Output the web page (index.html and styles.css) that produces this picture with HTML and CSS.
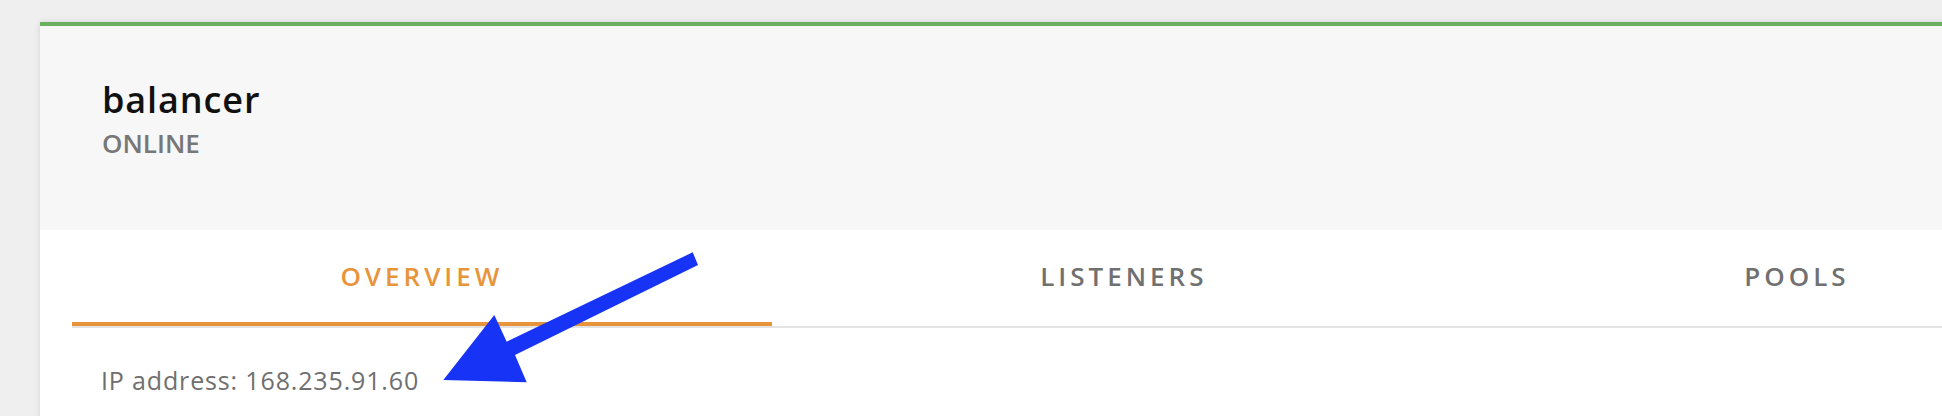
FILE: index.html
```html
<!DOCTYPE html>
<html lang="en">
<head>
    <meta charset="UTF-8">
    <meta name="viewport" content="width=device-width, initial-scale=1.0">
    <title>balancer</title>
    <link rel="stylesheet" href="styles.css">
</head>
<body>
    <div class="tarjeta">
        <div class="cabecera">
            <div class="nombre">balancer</div>
            <div class="estado">ONLINE</div>
        </div>
        <div class="pestanas">
            <div class="pestana activa">OVERVIEW</div>
            <div class="pestana">LISTENERS</div>
            <div class="pestana">POOLS</div>
        </div>
        <div class="contenido">
            IP address: 168.235.91.60
        </div>
    </div>

    <svg class="flecha" viewBox="0 0 1942 416" width="1942" height="416">
        <polygon points="692.7,252.3 698,265 515,355 526.7,382.3 443.3,380 494.3,315 506.7,341.7" fill="#1733f5"/>
    </svg>
</body>
</html>
```

FILE: styles.css
```css
body {
    margin: 0;
    font-family: "Open Sans", Arial, sans-serif;
    background-color: #efefef;
    overflow: hidden;
    height: 416px;
}
.tarjeta {
    margin: 22px 0 0 40px;
    width: 2110px;
    background: white;
    border-top: 4px solid #6aaf5e;
    box-shadow: 0 0 6px rgba(0, 0, 0, 0.12);
    min-height: 400px;
}
.cabecera {
    background: #f7f7f7;
    height: 204px;
    box-sizing: border-box;
    padding: 52px 62px 0;
}
.nombre {
    font-size: 36px;
    line-height: 44px;
    font-weight: 600;
    letter-spacing: 0.9px;
    color: #111;
}
.estado {
    margin-top: 5px;
    font-size: 26px;
    line-height: 32px;
    font-weight: 600;
    color: #777;
}
.pestanas {
    display: flex;
    margin: 0 32px;
    border-bottom: 2px solid #e3e3e3;
}
.pestana {
    flex: 1 1 auto;
    text-align: center;
    padding: 30px 0;
    line-height: 32px;
    font-size: 26px;
    font-weight: 600;
    letter-spacing: 4px;
    color: #707070;
    border-bottom: 4px solid transparent;
}
.pestana.activa {
    color: #e8943a;
    border-bottom-color: #e8943a;
}
.contenido {
    padding: 36px 61px 0;
    font-size: 25px;
    line-height: 32px;
    letter-spacing: 0.85px;
    color: #6f6f6f;
}
.flecha {
    position: absolute;
    left: 0;
    top: 0;
    pointer-events: none;
}
```
